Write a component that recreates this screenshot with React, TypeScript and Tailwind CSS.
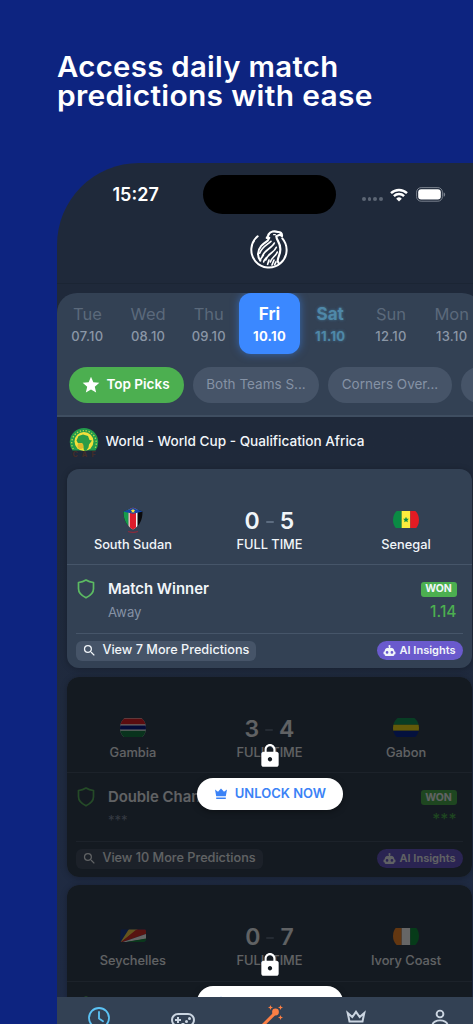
import type { ReactNode } from "react";
import { MdLock, MdSearch, MdStar } from "react-icons/md";

type Match = {
  home: string;
  away: string;
  score: [number, number];
  homeFlag: ReactNode;
  awayFlag: ReactNode;
  pick: string;
  tip: string;
  odds: string;
  more: number;
  locked?: boolean;
};

const days = [
  { day: "Tue", date: "07.10" },
  { day: "Wed", date: "08.10" },
  { day: "Thu", date: "09.10" },
  { day: "Fri", date: "10.10" },
  { day: "Sat", date: "11.10" },
  { day: "Sun", date: "12.10" },
  { day: "Mon", date: "13.10" },
];

function RoundFlag({ height, children }: { height: number; children: ReactNode }) {
  return (
    <span className="flex size-[26px] items-center justify-center overflow-hidden rounded-full">
      <svg width="26" height={height} viewBox="0 0 30 20" preserveAspectRatio="none">
        {children}
      </svg>
    </span>
  );
}

const southSudan = (
  <svg width="20" height="26" viewBox="0 0 20 26">
    <clipPath id="ss">
      <path d="M.5 4.500 10 .8l9.500 3.700c0 8-2.500 14-9.500 18C3 18.500.5 12.500.5 4.500Z" />
    </clipPath>
    <g clipPath="url(#ss)">
      <rect width="20" height="24" fill="#0a0a0c" />
      <rect width="5.500" height="24" fill="#169a4c" />
      <rect x="5.500" width="9" height="24" fill="#f4f4f4" />
      <rect x="6.700" width="6.300" height="24" fill="#dc1c2c" />
      <path d="M0 0h20v4.500L10 6.800 0 4.500Z" fill="#1546a6" />
      <path d="m10 1.500.7 1.500 1.600.2-1.200 1.100.3 1.600-1.400-.8-1.400.8.3-1.600-1.200-1.100L9.300 3Z" fill="#fadf35" />
    </g>
    <path d="M5 24.500c3 1 7 1 10 0" stroke="#8a2a3c" strokeWidth="1.200" fill="none" />
  </svg>
);

const senegal = (
  <RoundFlag height={17}>
    <path d="M0 0h10v20H0z" fill="#0b8a44" />
    <path d="M10 0h10v20H10z" fill="#fdec3d" />
    <path d="M20 0h10v20H20z" fill="#e31b23" />
    <path d="m15 6.800 1 2.200 2.300.2-1.700 1.600.5 2.400-2.100-1.200-2.100 1.200.5-2.400-1.700-1.600 2.300-.2Z" fill="#0b8a44" />
  </RoundFlag>
);

const gambia = (
  <RoundFlag height={19}>
    <path d="M0 0h30v20H0z" fill="#fff" />
    <path d="M0 .6h30v6H0z" fill="#e02027" />
    <path d="M0 8h30v4H0z" fill="#0c1c8c" />
    <path d="M0 13.400h30V20H0z" fill="#17804a" />
  </RoundFlag>
);

const gabon = (
  <RoundFlag height={19}>
    <path d="M0 0h30v7H0z" fill="#169a5a" />
    <path d="M0 7h30v6.500H0z" fill="#f7e017" />
    <path d="M0 13.500h30V20H0z" fill="#0b2c9c" />
  </RoundFlag>
);

const seychelles = (
  <svg width="26" height="26" viewBox="0 0 26 26">
    <clipPath id="sc">
      <path d="M2 6.500h22.500c1 0 1.500.6 1.500 1.600v8.500c0 1.500-1 2.400-2.500 2.400H1.500C.5 19 0 18.500.2 17.200L.6 8C.6 7 1 6.500 2 6.500Z" />
    </clipPath>
    <g clipPath="url(#sc)">
      <rect width="26" height="26" fill="#1c3f94" />
      <path d="M0 20 9 6h9Z" fill="#fbd34b" />
      <path d="M0 20 17 6h9v5Z" fill="#d9302c" />
      <path d="m0 20 26-9v5Z" fill="#fff" />
      <path d="m0 20 26-4.500V20Z" fill="#1b8a45" />
    </g>
  </svg>
);

const ivoryCoast = (
  <RoundFlag height={17}>
    <path d="M0 0h10v20H0z" fill="#f7892b" />
    <path d="M10 0h10v20H10z" fill="#fff" />
    <path d="M20 0h10v20H20z" fill="#10933f" />
  </RoundFlag>
);

const matches: Match[] = [
  {
    home: "South Sudan", away: "Senegal", score: [0, 5], homeFlag: southSudan, awayFlag: senegal,
    pick: "Match Winner", tip: "Away", odds: "1.14", more: 7,
  },
  {
    home: "Gambia", away: "Gabon", score: [3, 4], homeFlag: gambia, awayFlag: gabon,
    pick: "Double Chance", tip: "***", odds: "***", more: 10, locked: true,
  },
  {
    home: "Seychelles", away: "Ivory Coast", score: [0, 7], homeFlag: seychelles, awayFlag: ivoryCoast,
    pick: "Match Winner", tip: "***", odds: "***", more: 8, locked: true,
  },
];

function EagleLogo() {
  return (
    <svg width="39.300" height="40" viewBox="30 235 118 120" fill="none" stroke="#fff" strokeWidth="6" strokeLinecap="round" strokeLinejoin="round">
      <path d="M53 257A53 53 0 1 0 127 263" />
      <path d="M86 252l-6 10 8-1-5 9C70 279 55 289 54 310c0 8 3 14 7 20" />
      <path d="M86 251c5-9 18-11 27-7 8-1 14 4 13 12l-6-4c-4 3-8 2-11 5 1 14 13 18 12 40 0 14-7 20-8 34l4 8" strokeWidth="6.500" />
      <path d="M101 252h5" strokeWidth="4" />
      <path d="M93 272c-12 11-27 16-34 36M103 277c-7 17-32 20-37 43M109 290c-6 17-26 18-32 38M112 304c-4 12-17 16-21 30M61 328c3-8 6-10 9-14M71 334c1-6 4-9 7-12M83 341l4-13M96 343l6-15M104 342l4-8" strokeWidth="5" />
    </svg>
  );
}

function CafCrest() {
  return (
    <svg width="30" height="30" viewBox="0 0 30 30">
      <path d="M3.500 23.500A14.200 14.200 0 1 1 26.500 23.500Z" fill="#239b4b" />
      <path d="M4.300 22a12.300 12.300 0 1 1 21.400 0" fill="none" stroke="#b9d84b" strokeWidth="1.300" strokeDasharray="1.300 1.700" />
      <circle cx="15" cy="14.500" r="9.500" fill="#f3e03c" />
      <path d="M9.500 9 14 7.500l5 1.500 1.500 4 2.500.5-3 4-.5 3-2.500 3.500-2-.5-1-5-1-2.500-4 .2-1.500-2.700Z" fill="#2b9c47" />
      <circle cx="11.500" cy="19" r="3" fill="#dfb92c" />
      <text x="15" y="29.500" textAnchor="middle" textLength="23" fontSize="7" fontWeight="800" fill="#432c28" fontFamily="Inter">
        CAF
      </text>
    </svg>
  );
}

function Robot() {
  return (
    <svg width="13" height="13" viewBox="0 0 24 24" fill="currentColor">
      <path d="M12 2a2 2 0 0 1 2 2c0 .74-.4 1.390-1 1.730V7h1a7 7 0 0 1 7 7h1a1 1 0 0 1 1 1v3a1 1 0 0 1-1 1h-1v1a2 2 0 0 1-2 2H5a2 2 0 0 1-2-2v-1H2a1 1 0 0 1-1-1v-3a1 1 0 0 1 1-1h1a7 7 0 0 1 7-7h1V5.730C10.400 5.390 10 4.740 10 4a2 2 0 0 1 2-2M7.500 13A2.500 2.500 0 0 0 5 15.500 2.500 2.500 0 0 0 7.500 18a2.500 2.500 0 0 0 2.500-2.500A2.500 2.500 0 0 0 7.500 13m9 0a2.500 2.500 0 0 0-2.500 2.500 2.500 2.500 0 0 0 2.500 2.500 2.500 2.500 0 0 0 2.500-2.500 2.500 2.500 0 0 0-2.500-2.500Z" />
    </svg>
  );
}

function StatusBar() {
  return (
    <div className="flex h-[64px] items-center">
      <span className="ml-[55.500px] w-[90.500px] text-[18px] leading-none font-semibold text-white">15:27</span>
      <div className="h-[39px] w-[133px] rounded-full bg-black" />
      <div className="ml-[26px] flex gap-[2px] pt-[9px]">
        {[0, 1, 2, 3].map((dot) => (
          <i key={dot} className="size-[3.700px] rounded-full bg-[#5c6573]" />
        ))}
      </div>
      <svg className="ml-[7.500px]" width="18" height="14" viewBox="0 0 18 14" fill="none" stroke="#fff" strokeWidth="2.400">
        <path d="M1 5.200a11.500 11.500 0 0 1 16 0M3.900 8.100a7.300 7.300 0 0 1 10.200 0" />
        <path d="M9 13.500 6.200 10.700a4 4 0 0 1 5.600 0Z" fill="#fff" stroke="none" />
      </svg>
      <svg className="ml-[8px]" width="30" height="15" viewBox="0 0 30 15">
        <rect x=".6" y=".6" width="25.800" height="13.600" rx="4.500" fill="none" stroke="#7a828e" />
        <rect x="2.200" y="2.200" width="22.600" height="10.400" rx="3" fill="#fff" />
        <path d="M27.600 5.200c2 .8 2 3.800 0 4.600Z" fill="#7a828e" />
      </svg>
    </div>
  );
}

function DayTab({ day, date }: { day: string; date: string }) {
  if (day === "Fri") {
    return (
      <div className="flex h-[61px] flex-1 flex-col items-center rounded-[12px] bg-[#3b88ff] pt-[9px] text-white shadow-[0_0_8px_rgba(59,136,255,0.55)]">
        <span className="text-[17px] leading-[24px] font-bold">{day}</span>
        <span className="text-[13px] leading-[20px] font-bold tracking-[0.300px]">{date}</span>
      </div>
    );
  }
  if (day === "Sat") {
    return (
      <div className="flex h-[61px] flex-1 flex-col items-center pt-[9px] text-[#4f88a8] [text-shadow:0_0_3px_rgba(79,150,190,0.6)]">
        <span className="text-[17px] leading-[24px] font-bold">{day}</span>
        <span className="text-[13px] leading-[20px] font-bold tracking-[0.300px]">{date}</span>
      </div>
    );
  }
  return (
    <div className="flex h-[61px] flex-1 flex-col items-center pt-[9px]">
      <span className="text-[16.500px] leading-[24px] text-[#5b697b]">{day}</span>
      <span className="text-[13px] leading-[20px] font-medium tracking-[0.300px] text-[#8b97a7]">{date}</span>
    </div>
  );
}

function Team({ name, flag }: { name: string; flag: ReactNode }) {
  return (
    <div className="flex w-[131px] flex-col items-center pt-[38px]">
      {flag}
      <span className="mt-[3px] text-[12.800px] leading-[18px] font-medium whitespace-nowrap">{name}</span>
    </div>
  );
}

function MatchCard({ match }: { match: Match }) {
  return (
    <div className="relative h-[199.800px] shrink-0 overflow-hidden rounded-[12px] bg-[#334154] text-[#f1f5f9] shadow-[0_1px_6px_rgba(0,0,0,0.25)]">
      <div className="flex h-[96.500px] border-b border-[#465569]">
        <Team name={match.home} flag={match.homeFlag} />
        <div className="flex flex-1 flex-col items-center pt-[38px]">
          <div className="flex items-center gap-[6px] text-[23px] leading-[28px] font-semibold">
            <span>{match.score[0]}</span>
            <span className="mt-[2px] h-[2px] w-[8px] rounded-sm bg-[#5d6c80]" />
            <span>{match.score[1]}</span>
          </div>
          <span className="mt-px text-[12.800px] leading-[18px] font-medium">FULL TIME</span>
        </div>
        <Team name={match.away} flag={match.awayFlag} />
      </div>

      <div className="flex h-[68px] pt-[14px] pr-[15px] pl-[10px]">
        <svg width="18" height="20" viewBox="0 0 18 20" fill="none" stroke="#5cba62" strokeWidth="1.700" strokeLinejoin="round">
          <path d="M9 1c2.300 1.500 4.700 2.200 7.500 2.500v6.300c0 4.200-3.300 7-7.500 9-4.200-2-7.500-4.800-7.500-9V3.500C4.300 3.200 6.700 2.500 9 1Z" />
        </svg>
        <div className="ml-[12.500px] flex flex-1 flex-col">
          <span className="text-[14.900px] leading-[21px] font-semibold">{match.pick}</span>
          <span className="mt-[2px] text-[13.200px] leading-[20px] text-[#8592a5]">{match.tip}</span>
        </div>
        <div className="flex flex-col items-end">
          <span className="mt-[3px] flex h-[15px] w-[36px] items-center justify-center rounded-[3px] bg-[#4caf50] text-[10.500px] leading-none font-bold">
            WON
          </span>
          <span className="mt-[4px] text-[15.500px] leading-[21px] font-medium text-[#4caf50]">{match.odds}</span>
        </div>
      </div>

      <div className="mr-[9px] ml-[9px] flex items-center justify-between border-t border-[#465569] pt-[6.500px]">
        <span className="flex h-[20px] items-center gap-[5px] rounded-[6px] bg-[#465468] pr-[7px] pl-[6px] text-[12.700px] leading-none font-medium whitespace-nowrap">
          <MdSearch className="size-[15px]" />
          View {match.more} More Predictions
        </span>
        <span className="flex h-[19px] items-center gap-[4px] rounded-full bg-[#6a5acd] pr-[7px] pl-[6px] text-[11px] leading-none font-semibold whitespace-nowrap">
          <Robot />
          AI Insights
        </span>
      </div>

      {match.locked && (
        <div className="absolute inset-0 flex flex-col items-center bg-black/60 pt-[66.500px] pl-px">
          <MdLock className="size-[26px] text-white" />
          <span className="mt-[8.500px] flex h-[32px] w-[146px] items-center justify-center gap-[7px] rounded-full bg-white text-[13px] leading-none font-semibold text-[#3b82f6] shadow-[0_2px_6px_rgba(0,0,0,0.35)]">
            <svg width="14" height="12" viewBox="0 0 14 12" fill="currentColor">
              <path d="m1 1.500 3 2.300L7 .5l3 3.300 3-2.300-1.200 6.700H2.200ZM2.200 9.500h9.600V11H2.200Z" />
            </svg>
            UNLOCK NOW
          </span>
        </div>
      )}
    </div>
  );
}

function BottomNav() {
  return (
    <nav className="absolute inset-x-0 bottom-0 flex h-[27px] justify-between overflow-hidden bg-[#334154] pr-[30px] pl-[30px] text-[#cbd5e1]">
      <svg className="mt-[9px] shrink-0" width="24" height="24" viewBox="0 0 24 24" fill="none" stroke="#5cc3f5" strokeWidth="1.800" strokeLinecap="round">
        <circle cx="12" cy="12" r="10" />
        <path d="M12 6v6.500l4 2.700" />
      </svg>
      <svg className="mt-[11px] shrink-0" width="24" height="24" viewBox="0 0 24 24" fill="currentColor">
        <path d="M6 9h2v2h2v2H8v2H6v-2H4v-2h2V9m12.500 0a1.500 1.500 0 0 1 0 3 1.500 1.500 0 0 1 0-3m-3 3a1.500 1.500 0 0 1 0 3 1.500 1.500 0 0 1 0-3M17 5a7 7 0 0 1 0 14c-1.960 0-3.730-.8-5-2.100A6.960 6.960 0 0 1 7 19 7 7 0 0 1 7 5h10M7 7a5 5 0 0 0 0 10c1.640 0 3.090-.79 4-2h2c.91 1.210 2.360 2 4 2a5 5 0 0 0 0-10H7Z" />
      </svg>
      <svg className="mt-[7px] shrink-0" width="30" height="26" viewBox="-3 0 30 26" fill="#fb7f45">
        <path d="m2 22 13-13 2.200 2.200L4.200 24.200Z" />
        <circle cx="17.500" cy="8" r="3.400" />
        <path d="m12.500 1 .7 1.800 1.800.7-1.800.7-.7 1.800-.7-1.800-1.800-.7 1.800-.7ZM22.500 1l.7 1.800 1.800.7-1.800.7-.7 1.800-.7-1.800-1.800-.7 1.800-.7ZM22.500 11l.7 1.800 1.800.7-1.800.7-.7 1.800-.7-1.800-1.800-.7 1.800-.7Z" />
      </svg>
      <svg className="mt-[11px] shrink-0" width="24" height="24" viewBox="0 0 24 24" fill="none" stroke="currentColor" strokeWidth="2">
        <path d="m3.700 5 1.800 8.500h13L20.300 5l-4.600 4L12 3.800 8.300 9Z" />
      </svg>
      <svg className="mt-[11px] shrink-0" width="24" height="24" viewBox="0 0 24 24" fill="none" stroke="currentColor" strokeWidth="1.900">
        <circle cx="12" cy="6" r="3.400" />
        <path d="M4.500 17c0-3 4-4.600 7.500-4.600s7.500 1.600 7.500 4.600v2h-15Z" />
      </svg>
    </nav>
  );
}

export default function App() {
  return (
    <div className="flex h-[1024px] w-[473px] flex-col overflow-hidden bg-[#0d2480] font-[Inter,sans-serif]">
      <h1 className="h-[162.500px] shrink-0 pt-[53px] pl-[57px] text-[28px] leading-[28px] font-semibold tracking-[0.300px] whitespace-nowrap text-white">
        <span className="block origin-left scale-x-[1.048]">Access daily match</span>
        <span className="mt-[0.500px] block origin-left scale-x-[1.068]">predictions with ease</span>
      </h1>

      <div className="relative ml-[57px] flex w-[425px] flex-1 flex-col overflow-hidden rounded-tl-[82px] bg-linear-to-b from-[#1f293a] from-40% to-[#1f2b45]">
        <header className="h-[121px] shrink-0 border-b border-[#1b2534]">
          <StatusBar />
          <div className="flex justify-center pt-[2px]">
            <EagleLogo />
          </div>
        </header>

        <section className="mt-[9.500px] h-[124px] shrink-0 overflow-hidden rounded-t-[20px] border-b-2 border-[#3f4e61] bg-[#334154]">
          <div className="flex">
            {days.map((d) => (
              <DayTab key={d.day} {...d} />
            ))}
          </div>
          <div className="mt-[13px] ml-[12px] flex gap-[9px] text-[13.500px] leading-none whitespace-nowrap">
            <span className="flex h-[36px] w-[115px] shrink-0 items-center justify-center gap-[5px] rounded-full bg-[#4caf50] pr-[2px] font-semibold text-white">
              <MdStar className="size-[20px]" />
              Top Picks
            </span>
            <span className="flex h-[36px] w-[126px] shrink-0 items-center justify-center rounded-full bg-[#465468] text-[#8592a5]">
              Both Teams S...
            </span>
            <span className="flex h-[36px] w-[124px] shrink-0 items-center justify-center rounded-full bg-[#465468] text-[#8592a5]">
              Corners Over...
            </span>
            <span className="h-[36px] w-[124px] shrink-0 rounded-full bg-[#465468]" />
          </div>
        </section>

        <div className="flex h-[51.500px] shrink-0 items-center gap-[6.500px] pb-[2px] pl-[12px]">
          <CafCrest />
          <span className="text-[13.600px] leading-none font-medium whitespace-nowrap text-[#f1f5f9]">
            World - World Cup - Qualification Africa
          </span>
        </div>

        <div className="flex w-[414.500px] flex-col gap-[8.500px] pl-[10.400px]">
          {matches.map((m) => (
            <MatchCard key={m.home} match={m} />
          ))}
        </div>

        <BottomNav />
      </div>
    </div>
  );
}
